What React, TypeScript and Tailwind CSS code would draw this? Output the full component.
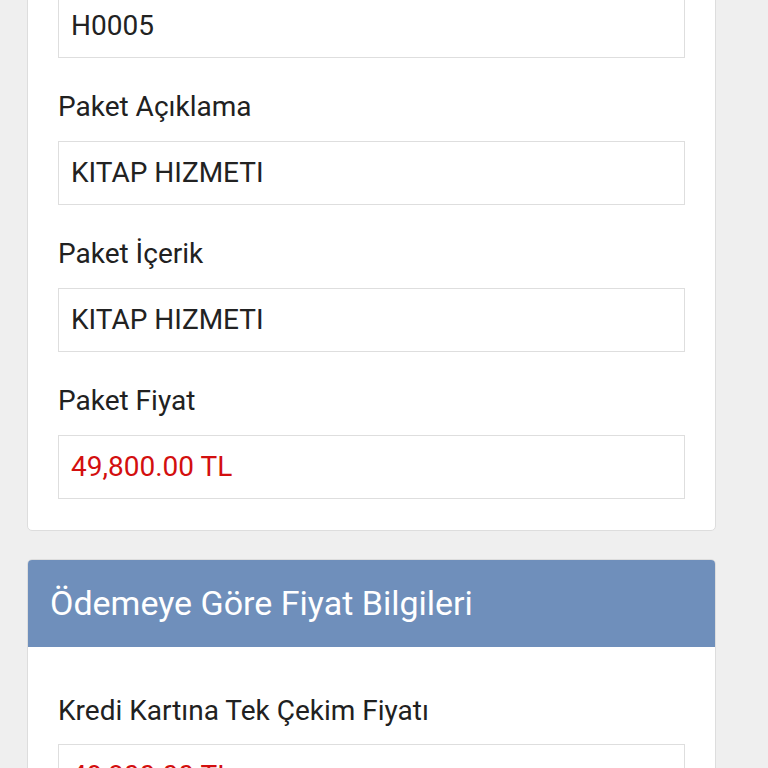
import React from 'react';

const fields = [
  { label: 'Paket Kodu', value: 'H0005' },
  { label: 'Paket Açıklama', value: 'KITAP HIZMETI' },
  { label: 'Paket İçerik', value: 'KITAP HIZMETI' },
  { label: 'Paket Fiyat', value: '49,800.00 TL', price: true },
];

const Field = ({
  label,
  value,
  price,
  gap = 'mb-4',
}: {
  label: string;
  value: string;
  price?: boolean;
  gap?: string;
}) => (
  <div>
    <div className={`text-[28px] leading-[36px] text-[#212121] ${gap}`}>{label}</div>
    <div
      className={`h-16 border border-[#dedede] bg-white px-3 flex items-center text-[28px] ${
        price ? 'text-[#d30f0f]' : 'text-[#222222]'
      }`}
    >
      {value}
    </div>
  </div>
);

const App = () => {
  return (
    <div
      className="h-[768px] overflow-hidden bg-[#efefef]"
      style={{ fontFamily: 'Roboto, "Noto Sans", sans-serif' }}
    >
      <div className="-mt-[89px] ml-[27px] w-[689px]">
        <div className="bg-white border border-[#dddddd] rounded-[5px] p-[30px] pb-[31px] flex flex-col gap-[31px]">
          {fields.map((f, i) => (
            <Field key={i} label={f.label} value={f.value} price={f.price} />
          ))}
        </div>

        <div className="mt-[28px] bg-white border border-[#dddddd] rounded-[5px] overflow-hidden">
          <div className="h-[87px] bg-[#6f8fbb] px-[22px] flex items-center text-white text-[34px]">
            Ödemeye Göre Fiyat Bilgileri
          </div>
          <div className="px-[30px] pt-[46px] pb-[30px] flex flex-col gap-[31px]">
            <Field label="Kredi Kartına Tek Çekim Fiyatı" value="49,800.00 TL" price gap="mb-[15px]" />
          </div>
        </div>
      </div>
    </div>
  );
};

export default App;
